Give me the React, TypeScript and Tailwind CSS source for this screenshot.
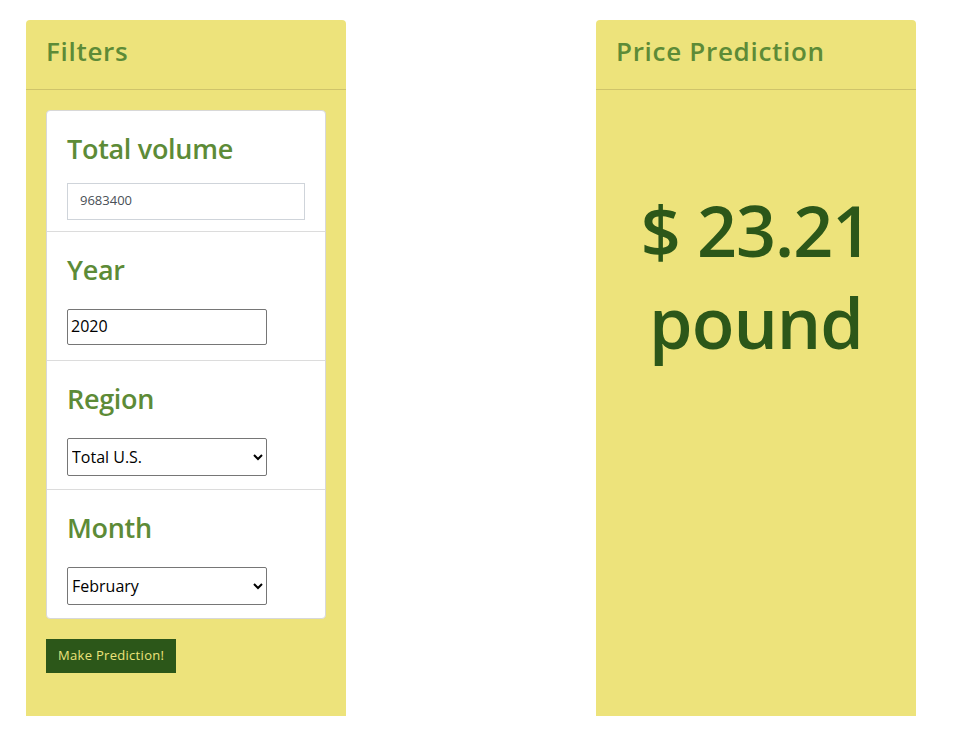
import React from "react";

const font = { fontFamily: '"Open Sans", "Noto Sans", sans-serif' };

function Section({
  title,
  children,
  first,
  pb,
}: {
  title: string;
  children: React.ReactNode;
  first?: boolean;
  pb: string;
}) {
  return (
    <div className={`px-[20px] pt-[20px] ${pb} ${first ? "" : "border-t border-[#dcdcdc]"}`}>
      <h3 className="text-[27px] leading-[36px] font-semibold text-[#5d8b37] tracking-[-0.3px]">{title}</h3>
      <div className={first ? "mt-[16px]" : "mt-[21px]"}>{children}</div>
    </div>
  );
}

export default function App() {
  return (
    <div className="min-h-[744px] bg-white" style={font}>
      <div className="flex items-start pl-[26px] pt-[20px] gap-[250px]">
        {/* Filters card */}
        <div className="w-[320px] h-[696px] bg-[#ede37b] rounded-t-[4px] flex flex-col">
          <div className="h-[70px] border-b border-[#cfc46a] px-[20px] pb-[6px] flex items-center">
            <h2 className="text-[26px] font-semibold text-[#5d8b37] tracking-[0.7px]">Filters</h2>
          </div>
          <div className="p-[20px]">
            <div className="bg-white border border-[#d8d8d8] rounded-[4px]">
              <Section title="Total volume" first pb="pb-[11px]">
                <input
                  className="block w-[238px] h-[37px] border border-[#cfd4da] px-[12px] pb-[3px] text-[13px] text-[#495057] bg-white outline-none"
                  defaultValue="9683400"
                />
              </Section>
              <Section title="Year" pb="pb-[15px]">
                <input
                  className="block w-[200px] h-[36px] border border-[#767676] rounded-[2px] px-[3px] pb-[2px] text-[16px] text-black bg-white outline-none"
                  defaultValue="2020"
                />
              </Section>
              <Section title="Region" pb="pb-[13px]">
                <select
                  className="block w-[200px] h-[38px] border border-[#767676] rounded-[2px] pl-0 text-[16px] text-black bg-white"
                  defaultValue="Total U.S."
                >
                  <option>Total U.S.</option>
                </select>
              </Section>
              <Section title="Month" pb="pb-[13px]">
                <select
                  className="block w-[200px] h-[38px] border border-[#767676] rounded-[2px] pl-0 text-[16px] text-black bg-white"
                  defaultValue="February"
                >
                  <option>February</option>
                </select>
              </Section>
            </div>
            <button className="mt-[20px] h-[34px] px-[12px] bg-[#2c5719] text-[#ede37b] text-[13px] font-medium tracking-[0.3px]">
              Make Prediction!
            </button>
          </div>
        </div>

        {/* Price card */}
        <div className="w-[320px] h-[696px] bg-[#ede37b] rounded-t-[4px] flex flex-col">
          <div className="h-[70px] border-b border-[#cfc46a] px-[20px] pb-[6px] flex items-center">
            <h2 className="text-[26px] font-semibold text-[#5d8b37] tracking-[0.7px]">Price Prediction</h2>
          </div>
          <div className="pt-[94px] text-center">
            <div className="text-[70px] leading-[92px] font-semibold text-[#2c5719] tracking-[-1px]">
              $ 23.21
              <br />
              pound
            </div>
          </div>
        </div>
      </div>
    </div>
  );
}
